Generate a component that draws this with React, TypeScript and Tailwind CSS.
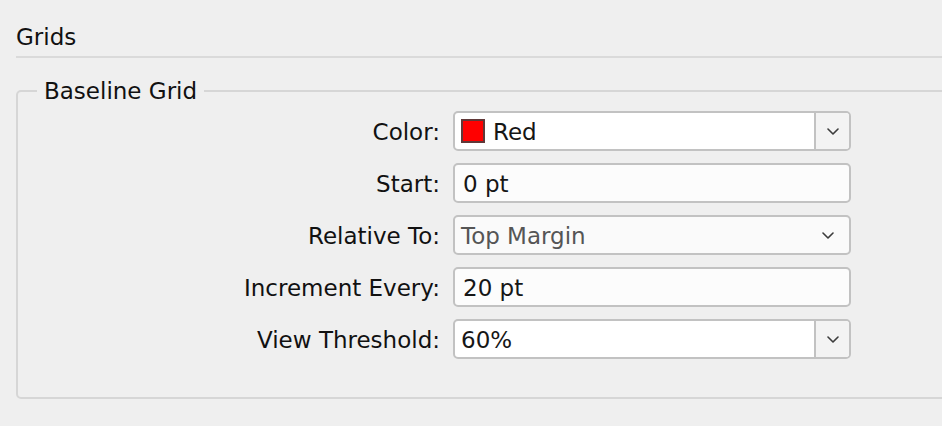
import React from 'react';

// Small chevron used by the popup menus
const Chevron = () => (
  <svg width="12" height="7" viewBox="0 0 12 7" fill="none">
    <polyline points="1,1 6,6 11,1" stroke="#3c3c3c" strokeWidth="1.6" strokeLinecap="round" strokeLinejoin="round" />
  </svg>
);

interface Row {
  label: string;
  kind: 'combo' | 'text' | 'select';
  value: string;
  swatch?: boolean;
  muted?: boolean;
}

const rows: Row[] = [
  { label: 'Color:', kind: 'combo', value: 'Red', swatch: true },
  { label: 'Start:', kind: 'text', value: '0 pt' },
  { label: 'Relative To:', kind: 'select', value: 'Top Margin', muted: true },
  { label: 'Increment Every:', kind: 'text', value: '20 pt' },
  { label: 'View Threshold:', kind: 'combo', value: '60%' },
];

const Field: React.FC<{ row: Row }> = ({ row }) => {
  const base = 'h-[40px] border-2 border-[#c2c2c2] rounded-[5px] flex items-center overflow-hidden';

  if (row.kind === 'combo') {
    return (
      <div className={`${base} bg-white`}>
        <div className="flex-1 flex items-center pl-[6px] h-full">
          {row.swatch && <span className="w-[24px] h-[24px] bg-[#ff0000] border-2 border-[#603838] mr-[8px]"></span>}
          <span className="text-[#161616] pt-[1px]">{row.value}</span>
        </div>
        <div className="w-[35px] h-full border-l-2 border-[#c2c2c2] bg-[#f3f3f3] flex items-center justify-center">
          <Chevron />
        </div>
      </div>
    );
  }

  if (row.kind === 'select') {
    return (
      <div className={`${base} bg-[#fafafa] justify-between pl-[6px] pr-[15px]`}>
        <span className="text-[#555555] pt-[1px]">{row.value}</span>
        <Chevron />
      </div>
    );
  }

  return (
    <div className={`${base} bg-[#fcfcfc] pl-[8px]`}>
      <span className="text-[#161616] pt-[1px]">{row.value}</span>
    </div>
  );
};

export default function App() {
  return (
    <div
      className="w-[942px] h-[426px] bg-[#efefef] overflow-hidden text-[23px] leading-[28px] text-[#111111]"
      style={{ fontFamily: '"DejaVu Sans", "Liberation Sans", sans-serif' }}
    >
      {/* Section header */}
      <div className="ml-4 pt-[23px] pb-[5px] border-b-2 border-[#dadada]">
        <span>Grids</span>
      </div>

      {/* Baseline Grid group */}
      <fieldset className="ml-4 mt-[19px] w-[960px] border-2 border-[#d6d6d6] rounded-[5px] pt-[6px] pb-[38px]">
        <legend className="ml-[19px] px-[7px]">Baseline Grid</legend>
        <div className="grid grid-cols-[422px_398px] gap-x-[13px] gap-y-[12px] items-center">
          {rows.map((row) => (
            <React.Fragment key={row.label}>
              <div className="text-right pt-[2px]">{row.label}</div>
              <Field row={row} />
            </React.Fragment>
          ))}
        </div>
      </fieldset>
    </div>
  );
}
